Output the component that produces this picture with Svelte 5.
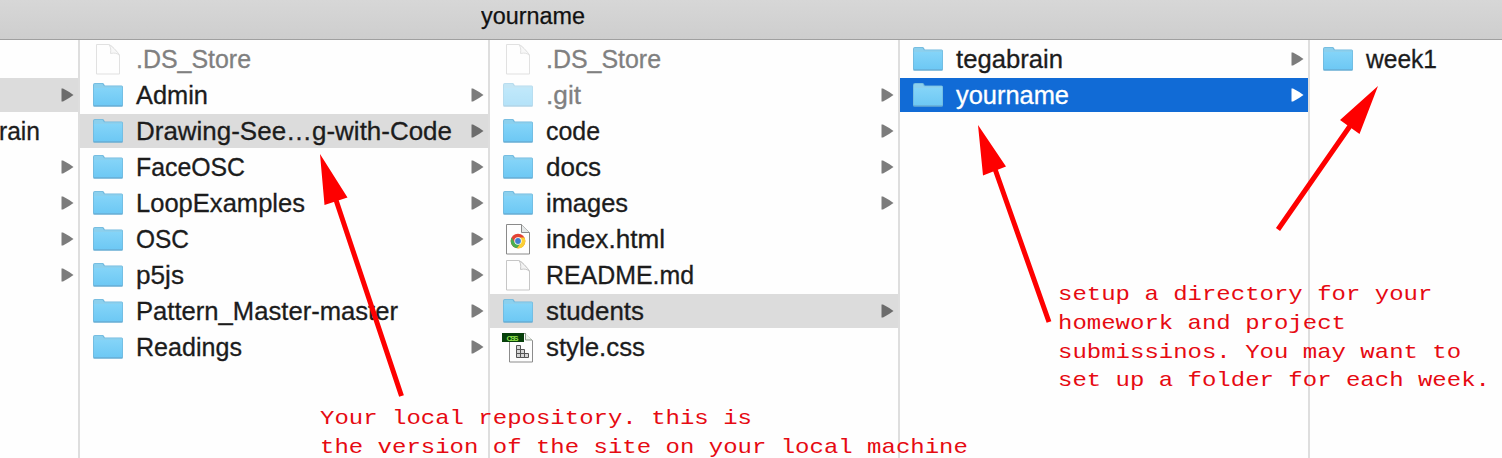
<script>
  const columns = [
    {
      width: 80,
      rows: [
        {},
        { arrow: true, selected: true },
        { name: 'rain', bare: true, w: 41 },
        { arrow: true },
        { arrow: true },
        { arrow: true },
        { arrow: true }
      ]
    },
    {
      width: 410,
      rows: [
        { name: '.DS_Store', icon: 'file', dim: true, w: 115 },
        { name: 'Admin', icon: 'folder', arrow: true, w: 72 },
        { name: 'Drawing-See…g-with-Code', icon: 'folder', arrow: true, selected: true, w: 316 },
        { name: 'FaceOSC', icon: 'folder', arrow: true, w: 109 },
        { name: 'LoopExamples', icon: 'folder', arrow: true, w: 169 },
        { name: 'OSC', icon: 'folder', arrow: true, w: 53 },
        { name: 'p5js', icon: 'folder', arrow: true, w: 48 },
        { name: 'Pattern_Master-master', icon: 'folder', arrow: true, w: 262 },
        { name: 'Readings', icon: 'folder', arrow: true, w: 106 }
      ]
    },
    {
      width: 410,
      rows: [
        { name: '.DS_Store', icon: 'file', dim: true, w: 115 },
        { name: '.git', icon: 'folder', dim: true, arrow: true, w: 35 },
        { name: 'code', icon: 'folder', arrow: true, w: 54 },
        { name: 'docs', icon: 'folder', arrow: true, w: 55 },
        { name: 'images', icon: 'folder', arrow: true, w: 82 },
        { name: 'index.html', icon: 'html', w: 119 },
        { name: 'README.md', icon: 'file', w: 148 },
        { name: 'students', icon: 'folder', arrow: true, selected: true, w: 98 },
        { name: 'style.css', icon: 'css', w: 99 }
      ]
    },
    {
      width: 410,
      rows: [
        { name: 'tegabrain', icon: 'folder', arrow: true, w: 107 },
        { name: 'yourname', icon: 'folder', arrow: true, active: true, w: 113 }
      ]
    },
    { width: 192, rows: [{ name: 'week1', icon: 'folder', w: 71 }] }
  ];

  const notes = [
    { x: 320, y: 424, text: 'Your local repository. this is' },
    { x: 320, y: 453, text: 'the version of the site on your local machine' },
    { x: 1058, y: 300, text: 'setup a directory for your' },
    { x: 1058, y: 329, text: 'homework and project' },
    { x: 1058, y: 358, text: 'submissinos. You may want to' },
    { x: 1058, y: 386, text: 'set up a folder for each week.' }
  ];
</script>

{#snippet page(edge)}
  <path d="M6.500 2.500H18.500Q21 3 24 6.500T29.500 13V32H6.500Z" fill="#fefefe" stroke={edge} />
  <path d="M18.500 2.500Q21.500 4.500 20.500 11.500 26.500 10 29.500 13.500 28.500 11 24 6.500 20.500 3 18.500 2.500Z" fill="#f3f3f3" stroke={edge} />
{/snippet}

<div class="finder">
  <header><svg class="title" width="106" height="36"><text x="0" y="24" textLength="104" lengthAdjust="spacingAndGlyphs">yourname</text></svg></header>
  <main>
    {#each columns as col}
      <section class="column" style="width: {col.width}px">
        {#each col.rows as row}
          <div class="row" class:selected={row.selected} class:active={row.active} class:dim={row.dim} class:bare={row.bare}>
            {#if row.icon}
              <svg class="icon" viewBox="0 0 36 34">
                {#if row.icon === 'folder'}
                  <path d="M3 27V7q0-2 2-2h7.500q1 0 1.500 1l.8 1.500H31.500q1.500 0 1.500 1.500v18q0 1.500-1.500 1.500H5q-2 0-2-1.500Z" fill="#70b8dd" />
                  <path d="M3.800 7.500q0-1.700 1.500-1.700H12.500l1.500 2.500H32.300v2H3.800Z" fill="#8bd0ee" />
                  <path d="M3.800 10h28.500v16.500q0 1-1 1H5q-1.200 0-1.200-1Z" fill="url(#folder-face)" />
                  <path d="M3.500 28h29" stroke="#62a7ce" />
                {:else if row.icon === 'file'}
                  {@render page('#c6c6c6')}
                {:else if row.icon === 'html'}
                  <path d="M6.500 2.500H21.500l8 8V32H6.500Z" fill="#fefefe" stroke="#8a8a8a" />
                  <path d="M21.500 2.500V10.500H29.500" fill="#e5e8e8" stroke="#8a8a8a" />
                  <circle cx="18" cy="19" r="7.300" fill="#e34335" />
                  <path d="M11.600 15.500A7.300 7.300 0 0 0 17 26.200L21 20.700 18 19 15 20.700Z" fill="#4aae4f" />
                  <path d="M18 15.500H24.400A7.300 7.300 0 0 1 17 26.300L21 20.700Z" fill="#fbd034" />
                  <circle cx="18" cy="19" r="3.700" fill="#fff" />
                  <circle cx="18" cy="19" r="2.900" fill="#427fd0" />
                {:else}
                  <path d="M9.500 3.500H25l7.500 7v21.500H9.500Z" fill="#fdfdfd" stroke="#8c8c8c" />
                  <path d="M25.500 3v7H32" fill="#eef4ec" stroke="#8c988a" />
                  <path d="M16.500 15.500h4v4h-4Zm0 4h4v4h-4Zm0 4h4v4h-4Zm4-4h4v4h-4Zm0 4h4v4h-4Zm4 0h4v4h-4Z" fill="#d6d6d6" stroke="#555" />
                  <path d="M2 3h22v9H2Z" fill="#063f0a" />
                  <text class="badge" x="6.500" y="10.500" textLength="12">CSS</text>
                {/if}
              </svg>
            {/if}
            {#if row.name}
              <svg class="label" width={row.w + 2} height="34"><text x="0" y="26" textLength={row.w} lengthAdjust="spacingAndGlyphs">{row.name}</text></svg>
            {/if}
            {#if row.arrow}
              <svg class="arrow" viewBox="0 0 13 14"><path d="M.5.500 2 .5Q7.500 3.300 12.500 7 7.500 10.700 2 13.500H.5Z" /></svg>
            {/if}
          </div>
        {/each}
      </section>
    {/each}
  </main>

  <svg class="overlay" viewBox="0 0 1502 458">
    <defs>
      <linearGradient id="folder-face" x1="0" y1="0" x2="0" y2="1">
        <stop offset="0" stop-color="#84d4f8" />
        <stop offset="1" stop-color="#6dc8f4" />
      </linearGradient>
    </defs>
    <path class="shaft" d="M336 200 401.500 396M995 169l54 153M1350 126l-72 103.500" />
    <path class="head" d="M320 154l4.500 51 23-7.500ZM978 125l5 50.500 23-9ZM1378 86l-38 34 19.500 14Z" />
    {#each notes as note}
      <text class="note" transform="translate({note.x} {note.y}) scale(1 0.85)">{note.text}</text>
    {/each}
  </svg>
</div>

<style>
  :global(body) { margin: 0; overflow: hidden; }
  .finder {
    position: relative;
    display: flex;
    flex-direction: column;
    width: 1502px;
    height: 458px;
    overflow: hidden;
    background: #fefefe;
    font-family: 'Liberation Sans', Arial, sans-serif;
    font-size: 25px;
  }
  header {
    box-sizing: border-box;
    height: 40px;
    padding-left: 481px;
    background: linear-gradient(#d7d7d7, #cecece);
    border-bottom: 1px solid #a0a0a0;
  }
  svg { display: block; flex: none; }
  .title { font-size: 23.5px; fill: #111; stroke: #111; stroke-width: 0.25px; }
  main { display: flex; flex: 1; }
  .column {
    box-sizing: border-box;
    flex: none;
    display: flex;
    flex-direction: column;
    gap: 2px;
    padding-top: 2px;
    border-right: 2px solid #dedede;
  }
  .column:last-child { border-right: 0; }
  .row {
    display: flex;
    align-items: center;
    height: 34px;
    padding: 0 4px 0 10px;
    fill: #1c1c1c;
  }
  .row.bare { padding-left: 0; }
  .selected { background: #dcdcdc; }
  .active { background: #116bd6; fill: #fff; }
  .icon { width: 36px; height: 34px; }
  .dim .icon { opacity: 0.5; }
  .dim { fill: #808080; }
  .label { margin-left: 10px; overflow: visible; stroke: #1c1c1c; stroke-width: 0.3px; }
  .dim .label { stroke: #808080; }
  .active .label { stroke: #fff; }
  .bare .label { margin-left: -1px; }
  .arrow { width: 13px; height: 14px; margin: 0 0 1px auto; fill: #7c7c7c; }
  .selected .arrow { fill: #6c6c6c; }
  .active .arrow { fill: #fff; }
  .badge { font-size: 8px; font-weight: bold; fill: #8ee04c; }
  .overlay { position: absolute; inset: 0; width: 1502px; height: 458px; }
  .shaft { fill: none; stroke: #fe0000; stroke-width: 5; }
  .head { fill: #fe0000; }
  .note {
    font-family: 'Liberation Mono', 'Courier New', monospace;
    font-size: 24px;
    fill: #e60a12;
  }
</style>
